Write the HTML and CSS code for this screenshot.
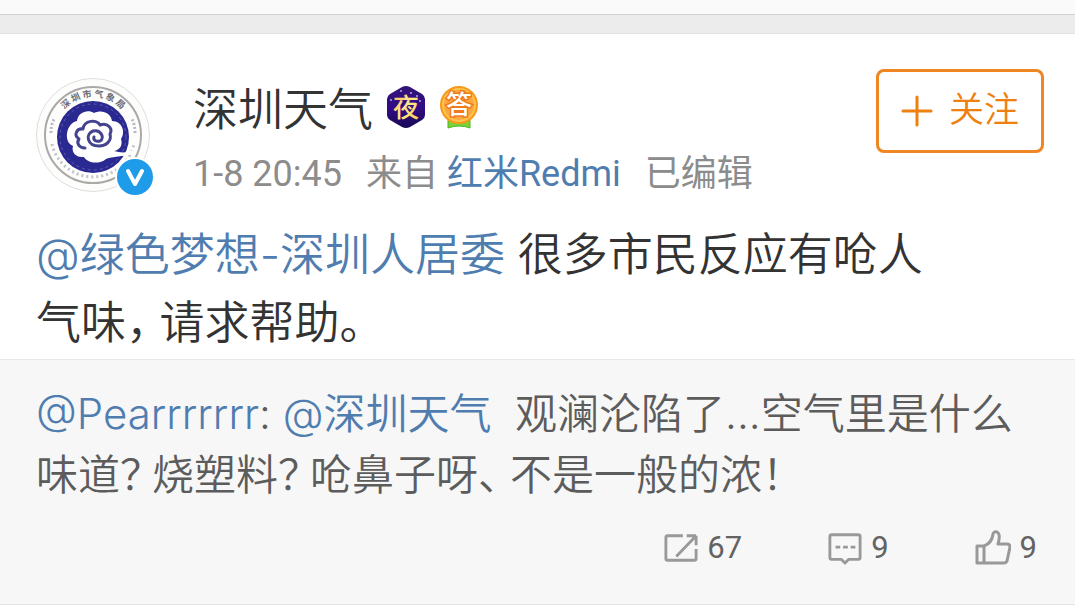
FILE: index.html
```html
<!DOCTYPE html>
<html lang="zh-CN">
<head>
    <meta charset="UTF-8">
    <meta name="viewport" content="width=device-width, initial-scale=1.0">
    <title>深圳天气</title>
    <link rel="stylesheet" href="styles.css">
</head>
<body>
    <div class="top-bar"></div>
    <div class="divider"></div>

    <article class="post">
        <header class="post-header">
            <div class="avatar">
                <svg class="avatar-logo" viewBox="0 0 114 114" role="img" aria-label="深圳天气头像">
                    <defs>
                        <path id="ring" d="M18 58a39 39 0 0 1 78 0"/>
                    </defs>
                    <circle cx="57" cy="57" r="56.5" fill="#fdfdfb" stroke="#dedede"/>
                    <circle cx="57" cy="57" r="48" fill="none" stroke="#aaa9a8" stroke-width="2"/>
                    <path d="M16 66a42 42 0 0 0 82 0" fill="none" stroke="#c2c2cc" stroke-width="3" stroke-dasharray="2 3"/>
                    <path d="M15 55q0-8 3-14M99 55q0-8-3-14" fill="none" stroke="#b9b9c4" stroke-width="3" stroke-dasharray="2 2"/>
                    <circle cx="57" cy="59" r="36" fill="#2a2991"/>
                    <circle cx="57" cy="59" r="33" fill="none" stroke="#5c5bb0" stroke-dasharray="3 3"/>
                    <path d="M41 43c1-9 11-12 17-8 8-4 17 0 18 8 10 0 14 11 9 18 2 6-1 11-7 12 7 2 13 2 19-1v4c-11 3-20 2-27 5-7 6-19 4-22-2-8 1-13-5-11-11-10-4-7-23 4-25z" fill="#fff"/>
                    <path d="M49 70c-6 0-9-5-6-9-6-4-2-11 4-10 1-9 14-10 17-4 8-3 13 4 10 9 2 7-4 12-11 12-12 0-14-12-6-15 8-2 12 7 7 10-4 1-7-1-6-4" fill="none" stroke="#44438e" stroke-width="3" stroke-linecap="round" stroke-linejoin="round"/>
                    <text class="avatar-text"><textPath href="#ring" startOffset="50%" text-anchor="middle">深 圳 市 气 象 局</textPath></text>
                </svg>
                <svg class="verified" viewBox="0 0 40 40" aria-hidden="true">
                    <circle cx="20" cy="20" r="20" fill="#fff"/>
                    <circle cx="20" cy="20" r="18" fill="#1e9be9"/>
                    <path d="M13 14l7 13 7-13" fill="none" stroke="#fff" stroke-width="4" stroke-linecap="round" stroke-linejoin="round"/>
                </svg>
            </div>

            <div class="author">
                <div class="author-name">
                    <span>深圳天气</span>
                    <svg class="badge" viewBox="0 0 40 44">
                        <defs>
                            <linearGradient id="night" x1="0" y1="0" x2="0" y2="1">
                                <stop offset="0" stop-color="#311475"/>
                                <stop offset="0.5" stop-color="#330c87"/>
                                <stop offset="1" stop-color="#170953"/>
                            </linearGradient>
                            <linearGradient id="gold" x1="0" y1="0" x2="1" y2="1">
                                <stop offset="0" stop-color="#f9a84f"/>
                                <stop offset="0.5" stop-color="#ffe88a"/>
                                <stop offset="1" stop-color="#fcc84b"/>
                            </linearGradient>
                        </defs>
                        <path d="M16 2q4-2 8 0l12 7q3 2 3 5v16q0 3-3 5l-12 7q-4 2-8 0L4 35q-3-2-3-5V14q0-3 3-5z" fill="url(#night)"/>
                        <g fill="#b5a5ed">
                            <circle cx="15" cy="6" r="1"/>
                            <circle cx="25" cy="8" r="1"/>
                            <circle cx="31" cy="11" r="1"/>
                            <circle cx="5" cy="15" r="1"/>
                            <circle cx="34" cy="16" r="1"/>
                        </g>
                        <text class="badge-text" x="20" y="32" text-anchor="middle" fill="url(#gold)">夜</text>
                    </svg>
                    <svg class="badge" viewBox="0 0 40 44">
                        <path d="M9 33h22v10q-5-2-11-2t-11 2z" fill="#7bd13a" stroke="#49b821"/>
                        <circle cx="20" cy="20" r="18" fill="#fdc34b" stroke="#f79a1c" stroke-width="2"/>
                        <circle cx="20" cy="20" r="15" fill="#fba73f"/>
                        <text class="badge-text badge-answer" x="20" y="29" text-anchor="middle">答</text>
                    </svg>
                </div>
                <div class="meta">
                    <time>1-8 20:45</time>
                    <span>来自 <a href="#">红米Redmi</a></span>
                    <span>已编辑</span>
                </div>
            </div>

            <button class="follow" type="button">
                <svg class="plus" viewBox="0 0 32 32" aria-hidden="true">
                    <path d="M16 2v28M2 16h28"/>
                </svg>
                关注
            </button>
        </header>

        <p class="post-text"><a href="#">@绿色梦想-深圳人居委</a> 很多市民反应有呛人<br>气味<span class="punct">，</span>请求帮助。</p>
    </article>

    <section class="quote">
        <p class="quote-text"><a href="#">@Pearrrrrrr</a>: <a href="#">@深圳天气</a>&nbsp; 观澜沦陷了...空气里是什么味道<span class="punct">？</span>烧塑料<span class="punct">？</span>呛鼻子呀<span class="punct">、</span>不是一般的浓<span class="punct">！</span></p>
        <div class="actions">
            <button type="button" aria-label="转发 67">
                <svg class="icon" viewBox="0 0 36 36">
                    <path d="M20 5H4q-2 0-2 2v22q0 2 2 2h28q2 0 2-2V19M34 15V5M24 5h10M13 27L33 6"/>
                </svg>
                67
            </button>
            <button type="button" aria-label="评论 9">
                <svg class="icon" viewBox="0 0 36 36">
                    <path d="M4 4h28q2 0 2 2v22q0 2-2 2H22l-4 4-4-4H4q-2 0-2-2V6q0-2 2-2zM8 17h5M16 17h5M24 17h5"/>
                </svg>
                9
            </button>
            <button type="button" aria-label="赞 9">
                <svg class="icon icon-like" viewBox="0 0 36 36">
                    <path d="M2 16h7v17H2zM9 16q8-3 9-12 1-3 4-2 4 2 1 12h9q3 0 3 3l-3 14q-1 2-3 2H9"/>
                </svg>
                9
            </button>
        </div>
    </section>
</body>
</html>
```

FILE: styles.css
```css
* {
    box-sizing: border-box;
}
body {
    font-family: Roboto, "Noto Sans CJK SC", sans-serif;
    font-weight: 350;
    margin: 0;
    background-color: #fff;
    color: #333;
}
a {
    color: #507daf;
    text-decoration: none;
}
button {
    font-family: inherit;
    font-weight: inherit;
    cursor: pointer;
}
.top-bar {
    height: 15px;
    background: #fafafa;
    border-bottom: 1px solid #d2d2d2;
}
.divider {
    height: 19px;
    background: #ececec;
    border-bottom: 1px solid #e0e0e0;
}
.post {
    padding: 35px 31px 2px 36px;
}
.post-header {
    display: flex;
    align-items: flex-start;
}
.avatar {
    position: relative;
    width: 114px;
    height: 114px;
    margin-top: 9px;
}
.avatar-logo {
    display: block;
    width: 114px;
    height: 114px;
}
.avatar-text {
    font-family: "Noto Sans CJK SC", sans-serif;
    font-size: 9px;
    font-weight: 700;
    fill: #696973;
}
.verified {
    position: absolute;
    right: -5px;
    bottom: -5px;
    width: 40px;
    height: 40px;
}
.author {
    flex: 1;
    margin-left: 43px;
}
.author-name {
    display: flex;
    align-items: flex-start;
    font-size: 45px;
    line-height: 84px;
}
.badge {
    width: 40px;
    height: 44px;
    margin: 16px 0 0 13px;
}
.badge-text {
    font-family: "Noto Sans CJK SC", sans-serif;
    font-size: 26px;
    font-weight: 500;
}
.badge-answer {
    fill: #fff;
    stroke: #f17b1b;
    stroke-width: 3px;
    paint-order: stroke;
}
.meta {
    display: flex;
    gap: 24px;
    font-size: 36px;
    font-weight: 400;
    line-height: 42px;
    color: #8c8c8c;
}
.follow {
    display: flex;
    align-items: center;
    gap: 16px;
    height: 84px;
    padding: 0 22px;
    border: 3px solid #ee8722;
    border-radius: 8px;
    background: #fff;
    color: #ee8010;
    font-size: 35px;
    line-height: 40px;
}
.plus {
    width: 32px;
    height: 32px;
    fill: none;
    stroke: #ee8010;
    stroke-width: 3;
    stroke-linecap: round;
}
.post-text {
    margin: 26px 0 0;
    font-family: Inter, "Noto Sans CJK SC", sans-serif;
    font-size: 45px;
    line-height: 68px;
}
.punct {
    font-family: "Noto Sans CJK SC", sans-serif;
    font-feature-settings: "halt";
    line-height: 0;
    margin-right: 11px;
}
.quote {
    padding: 23px 38px 32px 36px;
    background: #f7f7f7;
    border-top: 1px solid #e8e8e8;
    border-bottom: 1px solid #e4e4e4;
}
.quote-text {
    margin: 0;
    font-family: Inter, "Noto Sans CJK SC", sans-serif;
    font-size: 42px;
    line-height: 61px;
    color: #5c5c5c;
}
.actions {
    display: flex;
    justify-content: flex-end;
    gap: 86px;
    margin-top: 19px;
}
.actions button {
    display: flex;
    align-items: center;
    gap: 9px;
    padding: 0;
    border: none;
    background: none;
    color: #636363;
    font-size: 31px;
    font-weight: 400;
    line-height: 48px;
}
.icon {
    width: 34px;
    height: 34px;
    fill: none;
    stroke: #999;
    stroke-width: 3;
    stroke-linejoin: round;
}
.icon-like {
    width: 36px;
    height: 36px;
}
```
